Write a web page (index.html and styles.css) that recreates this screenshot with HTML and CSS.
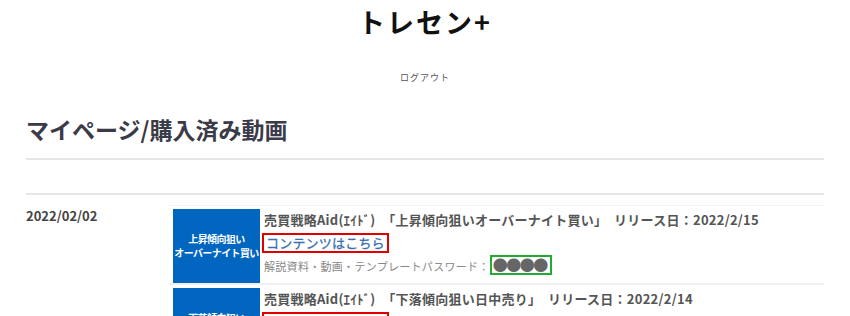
FILE: index.html
```html
<!DOCTYPE html>
<html lang="ja">
<head>
    <meta charset="UTF-8">
    <title>トレセン+ マイページ</title>
    <link rel="stylesheet" href="styles.css">
</head>
<body>
    <div class="container">
        <header class="header">
            <h1 class="logo">トレセン+</h1>
            <a class="logout" href="#">ログアウト</a>
        </header>

        <h2 class="page-title">マイページ/購入済み動画</h2>

        <div class="history">
            <div class="date">2022/02/02</div>
            <ul class="list">
                <li class="list-item">
                    <div class="thumb">上昇傾向狙い<br>オーバーナイト買い</div>
                    <div class="info">
                        <p class="name">売買戦略Aid(ｴｲﾄﾞ)　「上昇傾向狙いオーバーナイト買い」　リリース日：2022/2/15</p>
                        <a class="link" href="#">コンテンツはこちら</a>
                        <p class="pass">解説資料・動画・テンプレートパスワード：<span class="dots">●●●●</span></p>
                    </div>
                </li>
                <li class="list-item">
                    <div class="thumb">下落傾向狙い<br>日中売り</div>
                    <div class="info">
                        <p class="name">売買戦略Aid(ｴｲﾄﾞ)　「下落傾向狙い日中売り」　リリース日：2022/2/14</p>
                        <a class="link" href="#">コンテンツはこちら</a>
                        <p class="pass">解説資料・動画・テンプレートパスワード：<span class="dots">●●●●</span></p>
                    </div>
                </li>
            </ul>
        </div>
    </div>
</body>
</html>
```

FILE: styles.css
```css
body {
    margin: 0;
    font-family: "Noto Sans CJK JP", "Noto Sans", sans-serif;
    color: #444;
}

.container {
    max-width: 798px;
    margin: 0 auto;
    padding: 0 26px;
}

.header {
    display: flex;
    flex-direction: column;
    align-items: center;
}

.logo {
    margin: 2px 0 0;
    font-size: 27px;
    line-height: 40px;
    letter-spacing: 2px;
    color: #111;
}

.logout {
    margin-top: 29px;
    font-size: 9px;
    letter-spacing: 1px;
    color: #555;
    text-decoration: none;
}

.page-title {
    margin: 29px 0 0;
    padding-bottom: 13px;
    font-size: 23px;
    line-height: 32px;
    color: #3a3a48;
    border-bottom: 2px solid #e6e6e6;
}

.history {
    margin-top: 33px;
    border-top: 2px solid #e6e6e6;
    display: flex;
}

.date {
    width: 143px;
    padding-top: 11px;
    font-size: 13px;
    font-weight: bold;
    color: #444;
}

.list {
    flex: 1;
    margin: 0;
    padding: 0;
    list-style: none;
}

.list-item {
    display: flex;
    gap: 4px;
    padding: 3px 0 0 4px;
    border-top: 1px solid #f2f2f2;
    border-bottom: 2px solid #f0f0f0;
    margin-top: 10px;
}

.list-item + .list-item {
    margin-top: 0;
    border-top: none;
}

.thumb {
    width: 87px;
    height: 74px;
    flex-shrink: 0;
    background-color: #0066c0;
    color: #fff;
    font-size: 10px;
    font-weight: bold;
    line-height: 14px;
    letter-spacing: -0.6px;
    text-align: center;
    white-space: nowrap;
    display: flex;
    align-items: center;
    justify-content: center;
}

.info {
    display: flex;
    flex-direction: column;
    align-items: flex-start;
}

.name {
    margin: 0;
    font-size: 13px;
    font-weight: bold;
    line-height: 22px;
    letter-spacing: 0.25px;
    color: #555;
}

.link {
    margin: 2px 0 0 -2px;
    padding: 0 2px;
    border: 2px solid #e00000;
    font-size: 13px;
    line-height: 16px;
    letter-spacing: 0.2px;
    color: #3a70b0;
    -webkit-text-stroke: 0.3px #3a70b0;
    text-decoration: none;
}

.pass {
    margin: 2px 0 0;
    font-size: 11px;
    line-height: 20px;
    letter-spacing: 0.3px;
    color: #888;
}

.dots {
    display: inline-block;
    padding: 0 3px 0 1px;
    border: 2px solid #22aa33;
    line-height: 16px;
    font-size: 15px;
    color: #666;
    letter-spacing: -1.5px;
}
```
